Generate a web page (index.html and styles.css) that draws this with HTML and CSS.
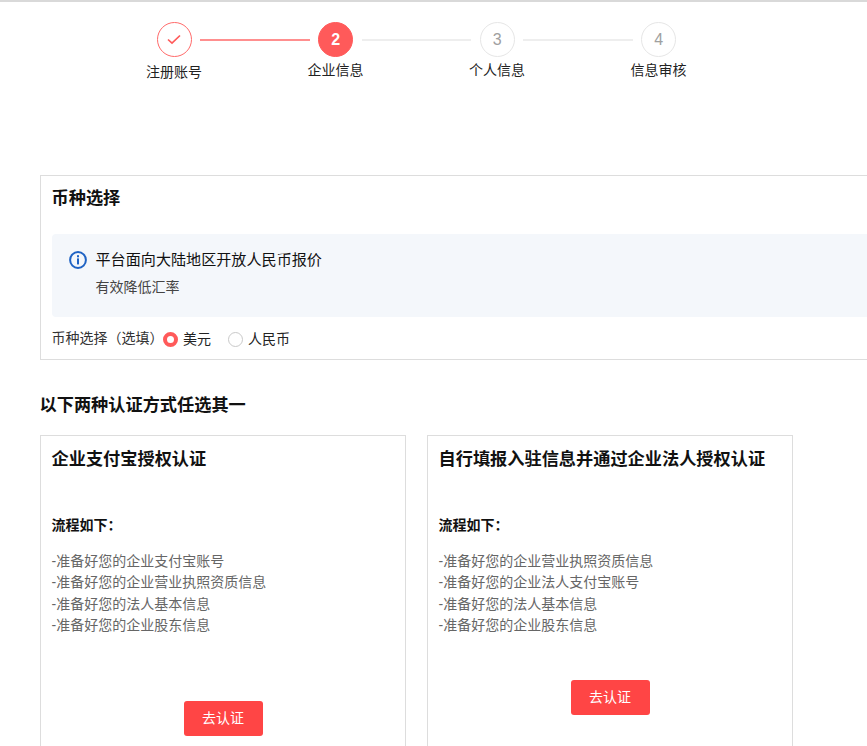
FILE: index.html
```html
<!DOCTYPE html>
<html lang="zh-CN">
<head>
<meta charset="utf-8">
<title>企业信息</title>
<link rel="stylesheet" href="styles.css">
</head>
<body>
<div class="page">
  <div class="steps">
    <div class="step step-done">
      <span class="dot"><svg width="14" height="11" viewBox="0 0 14 11"><path d="M1 5.5 5 9.2 13 1.5" fill="none" stroke="#ff5a5a" stroke-width="1.7"/></svg></span>
      <span class="step-label">注册账号</span>
    </div>
    <span class="line line-on"></span>
    <div class="step step-current">
      <span class="dot">2</span>
      <span class="step-label">企业信息</span>
    </div>
    <span class="line"></span>
    <div class="step">
      <span class="dot">3</span>
      <span class="step-label">个人信息</span>
    </div>
    <span class="line"></span>
    <div class="step">
      <span class="dot">4</span>
      <span class="step-label">信息审核</span>
    </div>
  </div>

  <section class="currency">
    <h2 class="card-title">币种选择</h2>
    <div class="notice">
      <svg class="notice-icon" width="18" height="18" viewBox="0 0 18 18">
        <circle cx="9" cy="9" r="7.9" fill="none" stroke="#1f63c4" stroke-width="2"/>
        <rect x="8" y="7.4" width="2" height="6" fill="#1f63c4"/>
        <rect x="8" y="4.2" width="2" height="2.1" fill="#1f63c4"/>
      </svg>
      <div class="notice-body">
        <p class="notice-title">平台面向大陆地区开放人民币报价</p>
        <p class="notice-text">有效降低汇率</p>
      </div>
    </div>
    <div class="radio-row">
      <span class="radio-label">币种选择（选填）</span>
      <span class="radio radio-on"></span><span class="radio-text">美元</span>
      <span class="radio"></span><span class="radio-text">人民币</span>
    </div>
  </section>

  <h2 class="section-title">以下两种认证方式任选其一</h2>

  <div class="methods">
    <section class="method">
      <h2 class="card-title">企业支付宝授权认证</h2>
      <p class="flow-title">流程如下：</p>
      <ul class="flow-list">
        <li>-准备好您的企业支付宝账号</li>
        <li>-准备好您的企业营业执照资质信息</li>
        <li>-准备好您的法人基本信息</li>
        <li>-准备好您的企业股东信息</li>
      </ul>
      <div class="action action-low"><button class="btn">去认证</button></div>
    </section>
    <section class="method">
      <h2 class="card-title">自行填报入驻信息并通过企业法人授权认证</h2>
      <p class="flow-title">流程如下：</p>
      <ul class="flow-list">
        <li>-准备好您的企业营业执照资质信息</li>
        <li>-准备好您的企业法人支付宝账号</li>
        <li>-准备好您的法人基本信息</li>
        <li>-准备好您的企业股东信息</li>
      </ul>
      <div class="action"><button class="btn">去认证</button></div>
    </section>
  </div>
</div>
</body>
</html>
```
FILE: styles.css
```css
* { box-sizing: border-box; }
html, body { margin: 0; height: 100%; overflow: hidden; background: #fff; }
body {
  font-family: "Liberation Sans", "Noto Sans CJK SC", sans-serif;
  color: #222;
  font-size: 14px;
}
h2, p, ul { margin: 0; padding: 0; }
ul { list-style: none; }

.page {
  width: 867px;
  height: 746px;
  overflow: hidden;
  border-top: 2px solid #d9d9d9;
  padding: 20px 0 0 40px;
}

.steps {
  display: flex;
  align-items: flex-start;
  padding-left: 116.6px;
  height: 153px;
}
.step {
  width: 35px;
  display: flex;
  flex-direction: column;
  align-items: center;
  flex: none;
}
.dot {
  width: 35px;
  height: 35px;
  border-radius: 50%;
  border: 1px solid #e6e6e6;
  color: #a0a0a0;
  font-size: 16px;
  display: flex;
  align-items: center;
  justify-content: center;
}
.step-label {
  white-space: nowrap;
  margin-top: 3px;
  line-height: 20px;
  color: #222;
}
.step-done .dot { border-color: #ff6a6a; }
.step-done .step-label { margin-top: 5px; }
.step-current .dot { background: #ff5a5a; border-color: #ff5a5a; color: #fff; font-size: 16px; font-weight: 700; }
.line {
  flex: none;
  width: 109.5px;
  height: 2px;
  margin: 17px 8.5px 0;
  background: #eee;
}
.line-on { background: #ff8f8f; }

.currency {
  width: 900px;
  height: 185px;
  border: 1px solid #ddd;
  padding: 0 10.5px;
}
.card-title {
  font-size: 17.2px;
  font-weight: 700;
  line-height: 24px;
  padding-top: 10px;
  color: #111;
}
.notice {
  display: flex;
  align-items: flex-start;
  height: 83px;
  margin: 24px 0 0 0.5px;
  background: #f4f7fb;
  border-radius: 4px;
  padding: 17px 0 0 17px;
}
.notice-icon { flex: none; }
.notice-body { margin-left: 8.5px; }
.notice-title { font-size: 15.1px; line-height: 18px; color: #111; }
.notice-text { font-size: 14px; line-height: 20px; margin-top: 8px; color: #444; }
.radio-row {
  display: flex;
  align-items: center;
  height: 20px;
  margin-top: 11px;
}
.radio-label { color: #333; width: 111.5px; flex: none; margin-top: -2px; }
.radio {
  width: 15px;
  height: 15px;
  border-radius: 50%;
  border: 1px solid #c9c9c9;
  flex: none;
  position: relative;
  top: 1px;
}
.radio-on { border: 4.5px solid #ff5a5a; }
.radio-text { margin-left: 5px; margin-right: 17px; color: #222; }

.section-title {
  font-size: 17.2px;
  font-weight: 700;
  line-height: 24px;
  margin: 33px 0 0 -0.5px;
  color: #111;
}

.methods {
  display: flex;
  gap: 21px;
  margin-top: 18px;
}
.method {
  width: 366px;
  height: 340px;
  flex: none;
  border: 1px solid #ddd;
  padding: 0 10.5px;
}
.method .card-title { padding-top: 11px; }
.flow-title {
  font-weight: 700;
  line-height: 20px;
  margin-top: 44px;
  color: #111;
}
.flow-list { margin-top: 15.5px; color: #666; }
.flow-list li { line-height: 21.5px; }
.action { display: flex; justify-content: center; margin-top: 43.5px; }
.action-low { margin-top: 64.5px; }
.btn {
  width: 79px;
  height: 35px;
  border: 0;
  border-radius: 3px;
  background: #ff4545;
  color: #fff;
  font: inherit;
  padding: 0 0 3px;
}
```
